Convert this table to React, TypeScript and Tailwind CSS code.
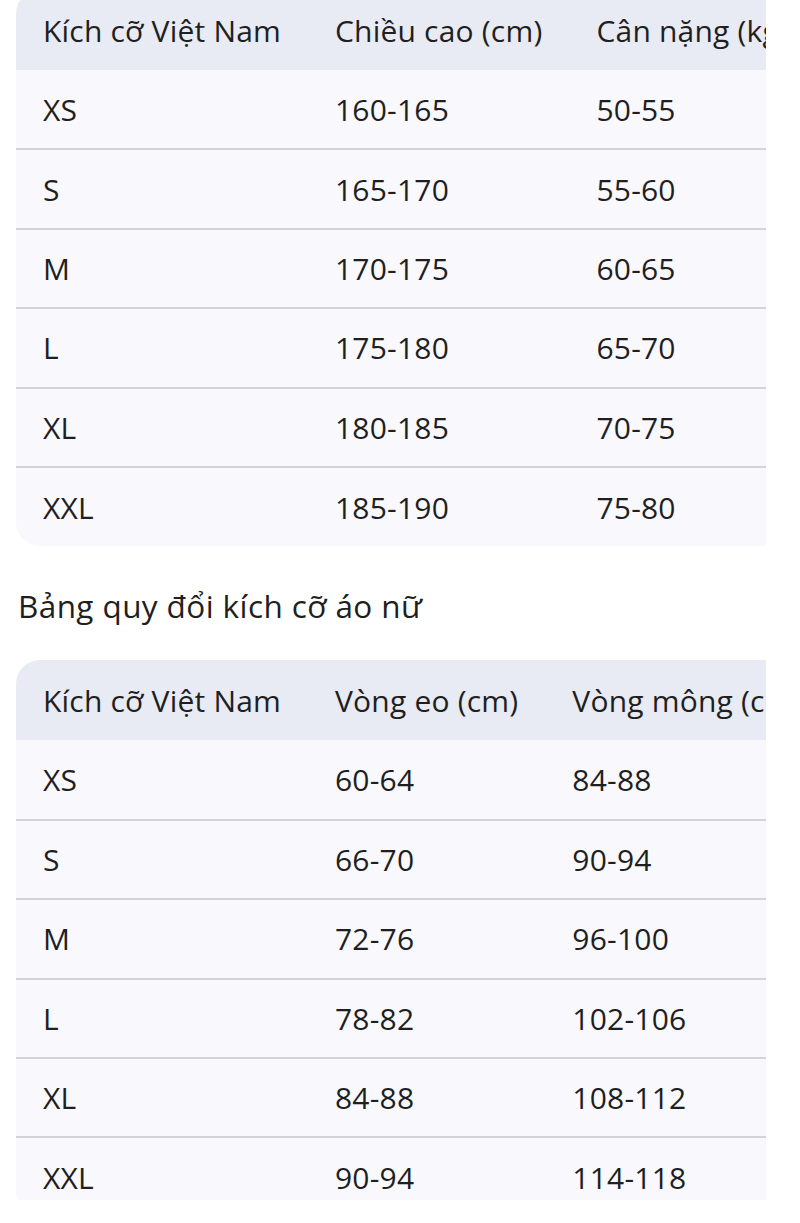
const menRows = [
  ["XS", "160-165", "50-55"],
  ["S", "165-170", "55-60"],
  ["M", "170-175", "60-65"],
  ["L", "175-180", "65-70"],
  ["XL", "180-185", "70-75"],
  ["XXL", "185-190", "75-80"],
];

const womenRows = [
  ["XS", "60-64", "84-88"],
  ["S", "66-70", "90-94"],
  ["M", "72-76", "96-100"],
  ["L", "78-82", "102-106"],
  ["XL", "84-88", "108-112"],
  ["XXL", "90-94", "114-118"],
];

function SizeTable({
  head,
  rows,
  clip,
}: {
  head: string[];
  rows: string[][];
  clip?: string;
}) {
  return (
    <div className={"w-[750px] overflow-hidden " + (clip ?? "")}>
      <div className="w-[1000px] overflow-hidden rounded-[24px]">
        <table className="w-full border-collapse whitespace-nowrap text-left">
          <thead>
            <tr className="bg-[#e8ebf3] h-[80px]">
              {head.map((h) => (
                <th key={h} className="px-[27px] font-normal">
                  {h}
                </th>
              ))}
              <th className="w-full"></th>
            </tr>
          </thead>
          <tbody>
            {rows.map((r, i) => (
              <tr
                key={r[0]}
                className={
                  "bg-[#f8f8fd] h-[79.4px] " +
                  (i < rows.length - 1 ? "border-b-2 border-[#d3d3d8]" : "")
                }
              >
                {r.map((c, j) => (
                  <td key={j} className="px-[27px]">
                    {c}
                  </td>
                ))}
                <td></td>
              </tr>
            ))}
          </tbody>
        </table>
      </div>
    </div>
  );
}

export default function App() {
  return (
    <div className="h-[1223px] w-[800px] overflow-hidden bg-white pl-4 text-[30px] tracking-[0.2px] text-[#1f1f1f] font-['Open_Sans',sans-serif]">
      <div className="-mt-[10px]">
        <SizeTable
          head={["Kích cỡ Việt Nam", "Chiều cao (cm)", "Cân nặng (kg)"]}
          rows={menRows}
        />
      </div>
      <h2 className="mt-[40px] mb-[34px] pl-[2px] text-[31.5px] tracking-[0.4px] leading-[40px]">
        Bảng quy đổi kích cỡ áo nữ
      </h2>
      <SizeTable
        head={["Kích cỡ Việt Nam", "Vòng eo (cm)", "Vòng mông (cm)"]}
        rows={womenRows}
        clip="h-[540px] rounded-bl-[4px]"
      />
    </div>
  );
}
